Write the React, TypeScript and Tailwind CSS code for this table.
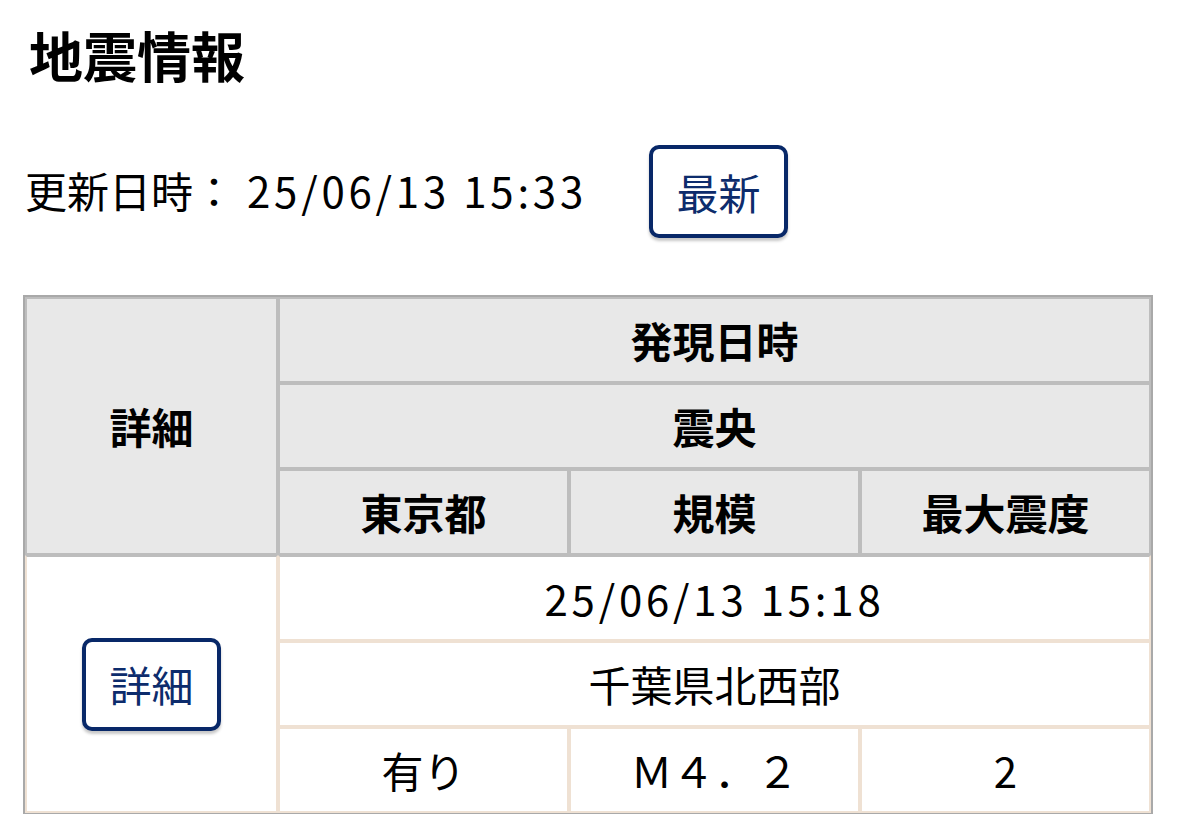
const headCell =
  "flex items-center justify-center border-2 border-[#bdbdbd] bg-[#e8e8e8] text-[42px] font-bold leading-none text-black";
const bodyCell =
  "flex items-center justify-center border-2 border-[#efe1d3] bg-white text-[42px] leading-none text-black";

function NavyButton({ label }: { label: string }) {
  return (
    <button className="flex h-[93px] w-[139px] items-center justify-center rounded-[10px] border-[4px] border-[#082868] bg-white text-[42px] leading-none text-[#0d2c6c] shadow-[0_3px_3px_rgba(0,0,0,0.22)]">
      {label}
    </button>
  );
}

export default function App() {
  return (
    <div className="min-h-[814px] bg-white px-[23px] font-['Noto_Sans_CJK_JP','Noto_Sans',sans-serif] text-black">
      {/* Title */}
      <h1 className="ml-[6px] pt-[28px] text-[54px] font-bold leading-none">地震情報</h1>

      {/* Update time */}
      <div className="mt-[63px] flex h-[93px] items-center">
        <span className="w-[626px] whitespace-nowrap pl-[2px] pb-[4px] text-[42px] leading-none">
          更新日時：
          <span className="ml-[12px] tracking-[0.09em]">25/06/13 15:33</span>
        </span>
        <NavyButton label="最新" />
      </div>

      {/* Table */}
      <div className="mt-[57px] w-[1130px] border-2 border-[#a9a9a9]">
        <div className="grid grid-cols-[253px_291px_291px_291px] grid-rows-[86px_86px_86px_86px_86px_86px]">
          <div className={`${headCell} row-span-3`}>詳細</div>
          <div className={`${headCell} col-span-3`}>発現日時</div>
          <div className={`${headCell} col-span-3`}>震央</div>
          <div className={headCell}>東京都</div>
          <div className={headCell}>規模</div>
          <div className={headCell}>最大震度</div>

          <div className={`${bodyCell} row-span-3 border-t-[#bdbdbd]`}>
            <NavyButton label="詳細" />
          </div>
          <div className={`${bodyCell} col-span-3 border-t-[#bdbdbd]`}>
            <span className="tracking-[0.09em]">25/06/13 15:18</span>
          </div>
          <div className={`${bodyCell} col-span-3`}>千葉県北西部</div>
          <div className={bodyCell}>有り</div>
          <div className={bodyCell}>Ｍ４．２</div>
          <div className={bodyCell}>2</div>
        </div>
      </div>
    </div>
  );
}
